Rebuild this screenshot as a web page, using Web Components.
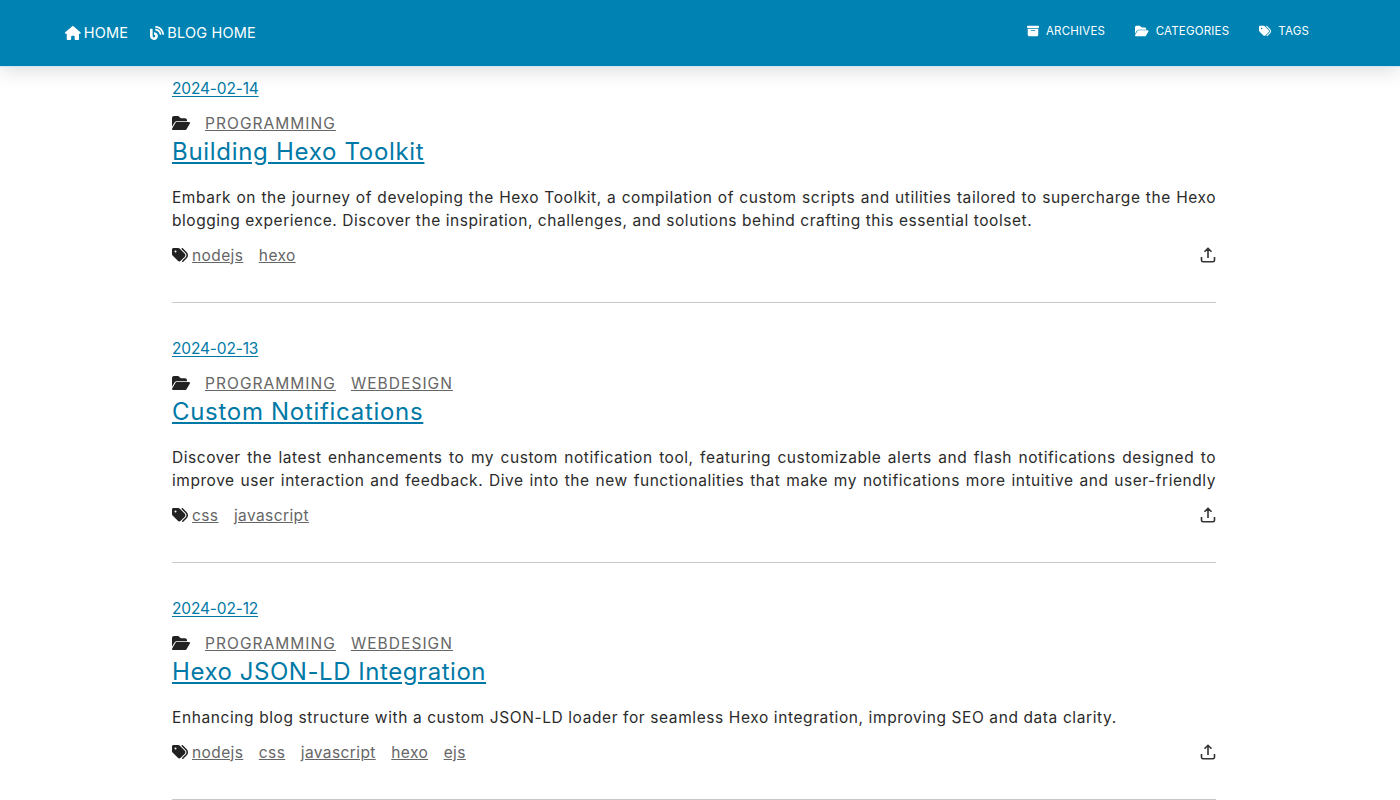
<!DOCTYPE html>
<html lang="en">
<head>
<meta charset="utf-8">
<title>Blog</title>
<style>
  html, body { margin: 0; background: #fff; }
  body { font-family: Inter, "Open Sans", sans-serif; color: #2b2b2b; }
</style>
</head>
<body>
<site-header></site-header>
<post-list>
  <post-card date="2024-02-14" title="Building Hexo Toolkit" cats="PROGRAMMING" tags="nodejs,hexo">
    Embark on the journey of developing the Hexo Toolkit, a compilation of custom scripts and utilities tailored to supercharge the Hexo blogging experience. Discover the inspiration, challenges, and solutions behind crafting this essential toolset.
  </post-card>
  <post-card date="2024-02-13" title="Custom Notifications" cats="PROGRAMMING,WEBDESIGN" tags="css,javascript" style="--last-line: justify">
    Discover the latest enhancements to my custom notification tool, featuring customizable alerts and flash notifications designed to improve user interaction and feedback. Dive into the new functionalities that make my notifications more intuitive and user-friendly
  </post-card>
  <post-card date="2024-02-12" title="Hexo JSON-LD Integration" cats="PROGRAMMING,WEBDESIGN" tags="nodejs,css,javascript,hexo,ejs" style="--excerpt-spacing: .6px; --title-spacing: .55px">
    Enhancing blog structure with a custom JSON-LD loader for seamless Hexo integration, improving SEO and data clarity.
  </post-card>
</post-list>

<script>
const ICONS = {
  home: [576, 'M575.8 255.5c0 18-15 32.1-32 32.1h-32l.7 160.2c0 2.7-.2 5.4-.5 8.1V472c0 22.1-17.9 40-40 40H456c-1.1 0-2.2 0-3.3-.1c-1.4 .1-2.8 .1-4.2 .1H416 392c-22.1 0-40-17.9-40-40V448 384c0-17.7-14.3-32-32-32H256c-17.7 0-32 14.3-32 32v64 24c0 22.1-17.9 40-40 40H160 128.1c-1.5 0-3-.1-4.5-.2c-1.2 .1-2.4 .2-3.6 .2H104c-22.1 0-40-17.9-40-40V360c0-.9 0-1.9 .1-2.8V287.6H32c-18 0-32-14-32-32.1c0-9 3-17 10-24L266.4 8c7-7 15-8 22-8s15 2 21 7L564.8 231.5c8 7 12 15 11 24z'],
  blog: [512, 'M172.2 226.8c-14.6-2.9-28.2 8.9-28.2 23.8V301c0 10.2 7.1 18.4 16.7 22 18.2 6.8 31.3 24.4 31.3 45 0 26.5-21.5 48-48 48s-48-21.5-48-48V120c0-13.3-10.7-24-24-24H24c-13.3 0-24 10.7-24 24v248c0 89.5 82.1 160.2 175 140.7 54.4-11.4 98.3-55.4 109.7-109.7 17.4-82.9-37-157.2-112.5-172.2zM209 0c-9.2-.5-17 6.8-17 16v31.6c0 8.5 6.6 15.5 15 15.9 129.4 7 233.4 112 240.9 241.5.5 8.4 7.5 15 15.9 15h32.1c9.2 0 16.5-7.8 16-17C503.4 139.8 372.2 8.6 209 0zm.3 96c-9.3-.7-17.3 6.7-17.3 16.1v32.1c0 8.4 6.5 15.3 14.8 15.9 76.8 6.3 138 68.2 144.9 145.2.8 8.3 7.6 14.7 15.9 14.7h32.2c9.3 0 16.8-8 16.1-17.3-8.4-110.1-96.5-198.2-206.6-206.7z'],
  archive: [512, 'M32 32H480c17.7 0 32 14.3 32 32V96c0 17.7-14.3 32-32 32H32C14.3 128 0 113.7 0 96V64C0 46.3 14.3 32 32 32zm0 128H480V416c0 35.3-28.7 64-64 64H96c-35.3 0-64-28.7-64-64V160zm128 80c0 8.8 7.2 16 16 16H336c8.8 0 16-7.2 16-16s-7.2-16-16-16H176c-8.8 0-16 7.2-16 16z'],
  folder: [576, 'M88.7 223.8L0 375.8V96C0 60.7 28.7 32 64 32H181.5c17 0 33.3 6.7 45.3 18.7l26.5 26.5c18 18 42.4 28.1 67.9 28.1H416c35.3 0 64 28.7 64 64v32H144c-22.8 0-43.8 12.1-55.3 31.8zm27.6 16.1C122.1 230 132.6 224 144 224H544c11.5 0 22 6.1 27.7 16.1s5.7 22.2-.1 32.1l-112 192C453.9 474 443.4 480 432 480H32c-11.5 0-22-6.1-27.7-16.1s-5.7-22.2 .1-32.1l112-192z'],
  tags: [512, 'M345 39.1L472.8 168.4c52.4 53 52.4 138.2 0 191.2L360.8 472.9c-9.3 9.4-24.5 9.5-33.9 .2s-9.5-24.5-.2-33.9L438.6 325.9c33.9-34.3 33.9-89.4 0-123.7L310.9 72.9c-9.3-9.4-9.2-24.6 .2-33.9s24.6-9.2 33.9 .2zM0 229.5V80C0 53.5 21.5 32 48 32H197.5c17 0 33.3 6.7 45.3 18.7l168 168c25 25 25 65.5 0 90.5L277.3 442.7c-25 25-65.5 25-90.5 0l-168-168C6.7 262.7 0 246.5 0 229.5zM144 144a32 32 0 1 0 -64 0 32 32 0 1 0 64 0z']
};

function icon(name, h) {
  const [w, d] = ICONS[name];
  return `<svg width="${h * w / 512}" height="${h}" viewBox="0 0 ${w} 512" fill="currentColor" aria-hidden="true"><path d="${d}"/></svg>`;
}

class SiteHeader extends HTMLElement {
  constructor() {
    super();
    const shadowRoot = this.attachShadow({ mode: 'open' });
    shadowRoot.innerHTML = `
      <style>
        :host {
          display: flex;
          justify-content: space-between;
          align-items: center;
          height: 65px;
          padding: 0 91px 1px 65px;
          background: #0083b3;
          color: #fff;
          box-shadow: 0 1px 0 #cfe7f1, 0 3px 20px rgba(0, 0, 0, .16);
          position: relative;
        }
        nav { display: flex; align-items: center; }
        a { color: inherit; text-decoration: none; display: flex; align-items: center; }
        .left { gap: 22px; }
        .left a { font-size: 14.5px; letter-spacing: .2px; gap: 3px; }
        .right { gap: 30px; position: relative; top: -2px; }
        .right a { font-size: 11.5px; letter-spacing: .2px; gap: 7px; }
      </style>
      <nav class="left">
        <a href="#">${icon('home', 14)}HOME</a>
        <a href="#">${icon('blog', 14)}BLOG HOME</a>
      </nav>
      <nav class="right">
        <a href="#">${icon('archive', 12)}ARCHIVES</a>
        <a href="#">${icon('folder', 12)}CATEGORIES</a>
        <a href="#">${icon('tags', 12)}TAGS</a>
      </nav>
    `;
  }
}

class PostList extends HTMLElement {
  constructor() {
    super();
    const shadowRoot = this.attachShadow({ mode: 'open' });
    shadowRoot.innerHTML = `
      <style>
        :host { display: block; width: 1044px; margin: 0 auto 0 172px; padding-top: 11px; }
      </style>
      <slot></slot>
    `;
  }
}

class PostCard extends HTMLElement {
  constructor() {
    super();
    const shadowRoot = this.attachShadow({ mode: 'open' });
    const cats = this.getAttribute('cats').split(',').map(c => `<a href="#">${c}</a>`).join('');
    const tags = this.getAttribute('tags').split(',').map(t => `<a href="#">${t}</a>`).join('');
    shadowRoot.innerHTML = `
      <style>
        :host {
          display: block;
          padding-bottom: 34.5px;
          margin-bottom: 34.5px;
          border-bottom: 1px solid #c8c8c8;
          font-size: 15.5px;
        }
        a { color: inherit; }
        .date { line-height: 24px; letter-spacing: -.16px; color: #0079a6; margin-bottom: 10px; }
        .date a { text-underline-offset: 2px; }
        .cats, .tags { display: flex; align-items: center; height: 24px; color: #666; }
        .cats svg, .tags svg { color: #222; flex: none; }
        .cats svg { margin-right: 15px; }
        .cats a { margin-right: 15px; letter-spacing: 1.05px; }
        h2 {
          margin: 0 0 17px;
          font-size: 24px;
          font-weight: 400;
          line-height: 34px;
          letter-spacing: var(--title-spacing, .7px);
          color: #0079a6;
        }
        p {
          margin: 0 0 11px;
          line-height: 23px;
          letter-spacing: var(--excerpt-spacing, .55px);
          text-align: justify;
          text-align-last: var(--last-line, left);
          color: #2b2b2b;
        }
        .foot { display: flex; justify-content: space-between; align-items: center; height: 24px; }
        .tags svg { margin-right: 4px; }
        .tags a { margin-right: 15.5px; letter-spacing: .4px; }
        .share { width: 18px; height: 18px; color: #333; margin-right: -1px; }
      </style>
      <div class="date"><a href="#">${this.getAttribute('date')}</a></div>
      <div class="cats">${icon('folder', 16)}${cats}</div>
      <h2><a href="#">${this.getAttribute('title')}</a></h2>
      <p><slot></slot></p>
      <div class="foot">
        <div class="tags">${icon('tags', 16)}${tags}</div>
        <svg class="share" viewBox="0 0 18 18" fill="none" stroke="currentColor" stroke-width="1.6" aria-hidden="true">
          <path d="M9 12V2.5M5.5 5.8 9 2.3l3.5 3.5M2.5 11v3.2c0 .9.7 1.6 1.6 1.6h9.8c.9 0 1.6-.7 1.6-1.6V11"/>
        </svg>
      </div>
    `;
  }
}

customElements.define('site-header', SiteHeader);
customElements.define('post-list', PostList);
customElements.define('post-card', PostCard);
</script>
</body>
</html>
